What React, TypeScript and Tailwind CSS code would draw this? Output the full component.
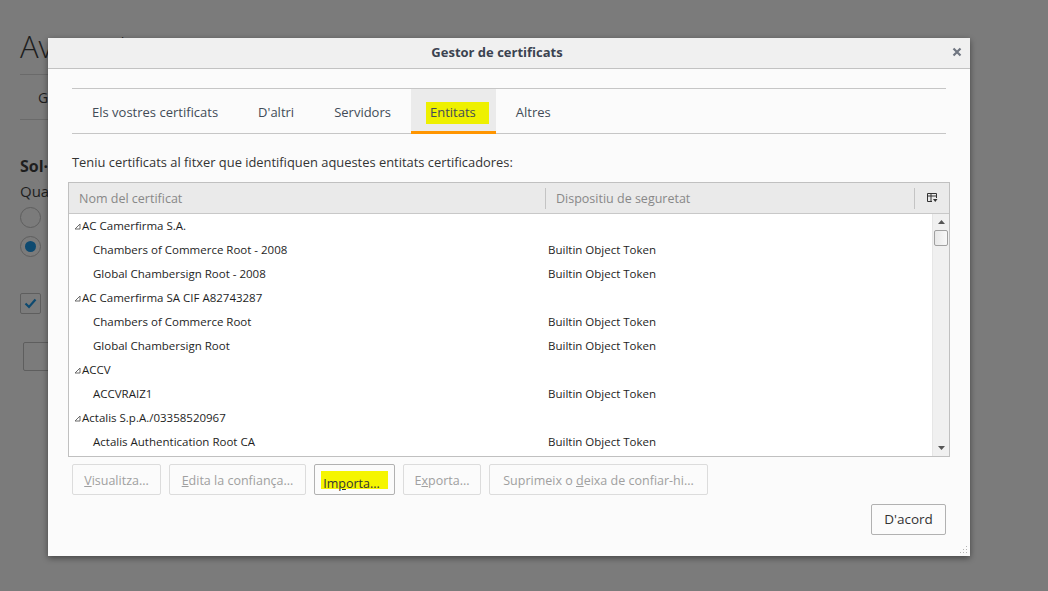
import React from "react";

type Row = { name: string; device?: string; parent?: boolean };

const rows: Row[] = [
  { name: "AC Camerfirma S.A.", parent: true },
  { name: "Chambers of Commerce Root - 2008", device: "Builtin Object Token" },
  { name: "Global Chambersign Root - 2008", device: "Builtin Object Token" },
  { name: "AC Camerfirma SA CIF A82743287", parent: true },
  { name: "Chambers of Commerce Root", device: "Builtin Object Token" },
  { name: "Global Chambersign Root", device: "Builtin Object Token" },
  { name: "ACCV", parent: true },
  { name: "ACCVRAIZ1", device: "Builtin Object Token" },
  { name: "Actalis S.p.A./03358520967", parent: true },
  { name: "Actalis Authentication Root CA", device: "Builtin Object Token" },
];

const tabs = ["Els vostres certificats", "D'altri", "Servidors", "Entitats", "Altres"];

const Twisty = () => (
  <svg width="7" height="7" viewBox="0 0 7 7" className="shrink-0">
    <path d="M6 1 L6 6 L1 6 Z" fill="none" stroke="#6b6b6b" strokeWidth="1" />
  </svg>
);

const Btn = ({
  children,
  disabled,
  className = "",
}: {
  children: React.ReactNode;
  disabled?: boolean;
  className?: string;
}) => (
  <button
    className={
      "h-[31px] rounded-[2px] border whitespace-nowrap flex items-center justify-center text-[12.5px] " +
      (disabled
        ? "border-[#dcdcdc] text-[#a0a0a0] bg-[#fbfbfb] "
        : "border-[#b1b1b1] text-[#333] bg-[#fbfbfb] ") +
      className
    }
  >
    <span>{children}</span>
  </button>
);

export default function App() {
  return (
    <div
      className="relative h-[591px] w-full overflow-hidden bg-[#7b7b7b] text-[#1d1d1d]"
      style={{ fontFamily: '"Open Sans", "Noto Sans", sans-serif' }}
    >
      {/* dimmed preferences page behind */}
      <div className="px-[20px] pt-[26px]">
        <div className="flex items-center justify-between w-[800px]">
          <h1 className="text-[31px] font-light leading-[40px] text-[#1e1e1e]">Avançat</h1>
          <div className="h-[17px] w-[17px] rounded-full border-[2px] border-[#5c5c5c] flex items-center justify-center text-[11px] font-bold text-[#5c5c5c]">
            ?
          </div>
        </div>
        <div className="mt-[8px] h-px w-[100px] bg-[#6a6a6a]" />
        <div className="pl-[18px] h-[44px] flex items-center text-[14px] text-[#1e1e1e]">General</div>
        <div className="h-px w-[100px] bg-[#6a6a6a]" />
        <div className="mt-[34px] text-[16px] font-bold text-[#1e1e1e]">Sol·licituds</div>
        <div className="mt-[2px] text-[15px] text-[#1e1e1e]">Quan</div>
        <div className="mt-[4px] h-[21px] w-[21px] rounded-full border border-[#5e5e5e]" />
        <div className="mt-[8px] h-[21px] w-[21px] rounded-full border border-[#5e5e5e] flex items-center justify-center">
          <div className="h-[11px] w-[11px] rounded-full bg-[#0e4a70]" />
        </div>
        <div className="mt-[36px] h-[21px] w-[21px] rounded-[2px] border border-[#5e5e5e] flex items-center justify-center">
          <svg width="13" height="11" viewBox="0 0 13 11">
            <path d="M1.5 5.5 L5 9 L11.5 1.5" fill="none" stroke="#0e4a70" strokeWidth="2.2" />
          </svg>
        </div>
        <div className="mt-[28px] ml-[3px] h-[29px] w-[40px] rounded-[2px] border border-[#5e5e5e]" />
      </div>

      {/* dialog */}
      <div className="absolute left-[48px] top-[38px] w-[922px] h-[518px] flex flex-col bg-[#fbfbfb] rounded-t-[2px] shadow-[0_2px_6px_rgba(0,0,0,0.45)]">
        <div className="relative h-[31px] shrink-0 flex items-center justify-center pr-[24px] bg-[#f0f0f0] border-b border-[#c2c2c2]">
          <span className="text-[13px] font-bold text-[#3b4350]">Gestor de certificats</span>
          <svg className="absolute right-[8px] top-[9px]" width="10" height="10" viewBox="0 0 10 10">
            <path d="M1.5 1.5 L8.5 8.5 M8.5 1.5 L1.5 8.5" stroke="#707681" strokeWidth="2.2" />
          </svg>
        </div>

        <div className="flex flex-col px-[24px] pt-[19px] flex-1">
          {/* tabs */}
          <div className="flex h-[46px] border-t border-b border-[#c6c6c6]">
            {tabs.map((t) => {
              const sel = t === "Entitats";
              return (
                <div
                  key={t}
                  className={
                    "relative flex items-center justify-center text-[13px] text-[#424b57] " +
                    (sel
                      ? "bg-[#ebebeb] border-b-[3px] border-[#ff9500] mb-[-1px] pt-[6px] pl-[15px] pr-[7px]"
                      : "px-[20px] pt-[4px]")
                  }
                >
                  {sel ? (
                    <span className="bg-[#eef000] pl-[4px] pr-[13px] py-[1px]">{t}</span>
                  ) : (
                    t
                  )}
                </div>
              );
            })}
          </div>

          <p className="mt-[19px] text-[12.9px] text-[#333] leading-[18px]">
            Teniu certificats al fitxer que identifiquen aquestes entitats certificadores:
          </p>

          {/* tree */}
          <div className="mt-[11px] mx-[-4px] h-[275px] border border-[#c0c0c0] bg-white flex flex-col">
            <div className="h-[31px] shrink-0 flex items-center bg-[#eaeaea] border-b border-[#c8c8c8] text-[12.5px] text-[#888]">
              <div className="w-[477px] pl-[10px] pt-[3px] border-r border-[#c4c4c4] h-[21px] flex items-center">Nom del certificat</div>
              <div className="flex-1 pl-[10px] pt-[3px] border-r border-[#c4c4c4] h-[21px] flex items-center">Dispositiu de seguretat</div>
              <div className="w-[34px] flex items-center justify-center">
                <svg width="11" height="10" viewBox="0 0 11 10">
                  <path d="M0.5 0.5 H9.5 V5 M0.5 0.5 V8.5 H5 M0.5 3 H9.5 M4 0.5 V8.5" fill="none" stroke="#333" strokeWidth="1" />
                  <path d="M6 6 H10.5 L8.25 9 Z" fill="#333" />
                </svg>
              </div>
            </div>
            <div className="flex flex-1 min-h-0">
              <div className="flex-1 text-[11.5px] text-[#1e1e1e]">
                {rows.map((r, i) => (
                  <div key={i} className="h-[24px] flex items-center">
                    <div className="w-[477px] flex items-center">
                      {r.parent ? (
                        <div className="flex items-center gap-[1px] pl-[5px]">
                          <Twisty />
                          <span>{r.name}</span>
                        </div>
                      ) : (
                        <span className="pl-[24px]">{r.name}</span>
                      )}
                    </div>
                    <span className="pl-[2px]">{r.device}</span>
                  </div>
                ))}
              </div>
              <div className="w-[17px] bg-[#f0f0f0] border-l border-[#e6e6e6] flex flex-col items-center">
                <svg className="mt-[6px]" width="7" height="4" viewBox="0 0 7 4">
                  <path d="M0 4 L3.5 0 L7 4 Z" fill="#555" />
                </svg>
                <div className="mt-[6px] h-[16px] w-[14px] rounded-[2px] border border-[#a0a0a0] bg-gradient-to-r from-[#e8e8e8] to-[#f8f8f8]" />
                <div className="flex-1" />
                <svg className="mb-[6px]" width="7" height="4" viewBox="0 0 7 4">
                  <path d="M0 0 L7 0 L3.5 4 Z" fill="#555" />
                </svg>
              </div>
            </div>
          </div>

          {/* buttons */}
          <div className="mt-[7px] flex gap-[8px]">
            <Btn disabled className="w-[89px] pt-[3px]">
              <u>V</u>isualitza...
            </Btn>
            <Btn disabled className="w-[137px] pt-[3px]">
              <u>E</u>dita la confiança...
            </Btn>
            <Btn className="w-[81px] pt-[1px]">
              <span className="inline-block bg-[#f5f500] pl-[2px] pr-[8px] pt-[1px] pb-[1px] mt-[-6px] leading-[16px]">
                <span className="relative top-[4px]">
                  Im<u>p</u>orta...
                </span>
              </span>
            </Btn>
            <Btn disabled className="w-[78px] pt-[3px]">
              E<u>x</u>porta...
            </Btn>
            <Btn disabled className="w-[219px] pt-[3px]">
              Suprimeix o <u>d</u>eixa de confiar-hi...
            </Btn>
          </div>

          <div className="mt-[9px] flex justify-end">
            <Btn className="w-[75px] h-[29px] text-[13.5px]">D'acord</Btn>
          </div>
        </div>

        <svg className="absolute right-[2px] bottom-[2px]" width="9" height="9" viewBox="0 0 9 9">
          <g fill="#b5b5b5">
            <rect x="7" y="1" width="1" height="1" />
            <rect x="4" y="4" width="1" height="1" />
            <rect x="7" y="4" width="1" height="1" />
            <rect x="1" y="7" width="1" height="1" />
            <rect x="4" y="7" width="1" height="1" />
            <rect x="7" y="7" width="1" height="1" />
          </g>
        </svg>
      </div>
    </div>
  );
}
